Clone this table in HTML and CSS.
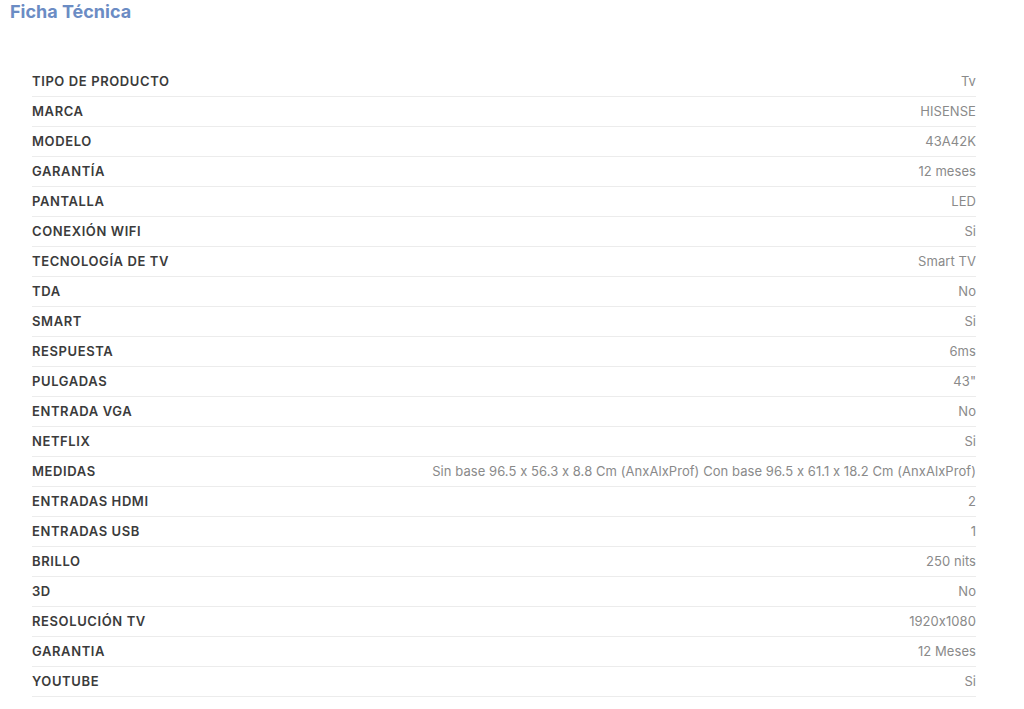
FILE: index.html
```html
<!DOCTYPE html>
<html lang="es">
<head>
    <meta charset="UTF-8">
    <meta name="viewport" content="width=device-width, initial-scale=1.0">
    <title>Ficha Técnica</title>
    <link rel="stylesheet" href="styles.css">
</head>
<body>
    <h2 class="ficha-title">Ficha Técnica</h2>
    <table class="ficha">
        <tr><th>TIPO DE PRODUCTO</th><td>Tv</td></tr>
        <tr><th>MARCA</th><td>HISENSE</td></tr>
        <tr><th>MODELO</th><td>43A42K</td></tr>
        <tr><th>GARANTÍA</th><td>12 meses</td></tr>
        <tr><th>PANTALLA</th><td>LED</td></tr>
        <tr><th>CONEXIÓN WIFI</th><td>Si</td></tr>
        <tr><th>TECNOLOGÍA DE TV</th><td>Smart TV</td></tr>
        <tr><th>TDA</th><td>No</td></tr>
        <tr><th>SMART</th><td>Si</td></tr>
        <tr><th>RESPUESTA</th><td>6ms</td></tr>
        <tr><th>PULGADAS</th><td>43"</td></tr>
        <tr><th>ENTRADA VGA</th><td>No</td></tr>
        <tr><th>NETFLIX</th><td>Si</td></tr>
        <tr><th>MEDIDAS</th><td>Sin base 96.5 x 56.3 x 8.8 Cm (AnxAlxProf) Con base 96.5 x 61.1 x 18.2 Cm (AnxAlxProf)</td></tr>
        <tr><th>ENTRADAS HDMI</th><td>2</td></tr>
        <tr><th>ENTRADAS USB</th><td>1</td></tr>
        <tr><th>BRILLO</th><td>250 nits</td></tr>
        <tr><th>3D</th><td>No</td></tr>
        <tr><th>RESOLUCIÓN TV</th><td>1920x1080</td></tr>
        <tr><th>GARANTIA</th><td>12 Meses</td></tr>
        <tr><th>YOUTUBE</th><td>Si</td></tr>
    </table>
</body>
</html>
```

FILE: styles.css
```css
body {
    background-color: #fff;
    color: #333;
    font-family: Inter, 'Liberation Sans', Arial, sans-serif;
    font-feature-settings: "calt" 0;
    margin: 0;
    padding: 0;
}
.ficha-title {
    margin: 0;
    padding: 2px 10px 0;
    font-size: 18px;
    font-weight: 700;
    line-height: 20px;
    color: #6b8cc4;
}
.ficha {
    margin: 44px 48px 0 32px;
    width: 944px;
    border-collapse: collapse;
    font-size: 13px;
}
.ficha tr {
    height: 30px;
    border-bottom: 1px solid #ececec;
}
.ficha th {
    padding: 0;
    text-align: left;
    font-weight: 600;
    letter-spacing: 0.6px;
    color: #3b3b3b;
    white-space: nowrap;
}
.ficha td {
    padding: 0;
    text-align: right;
    letter-spacing: 0.06px;
    color: #8a8a8a;
}
```
